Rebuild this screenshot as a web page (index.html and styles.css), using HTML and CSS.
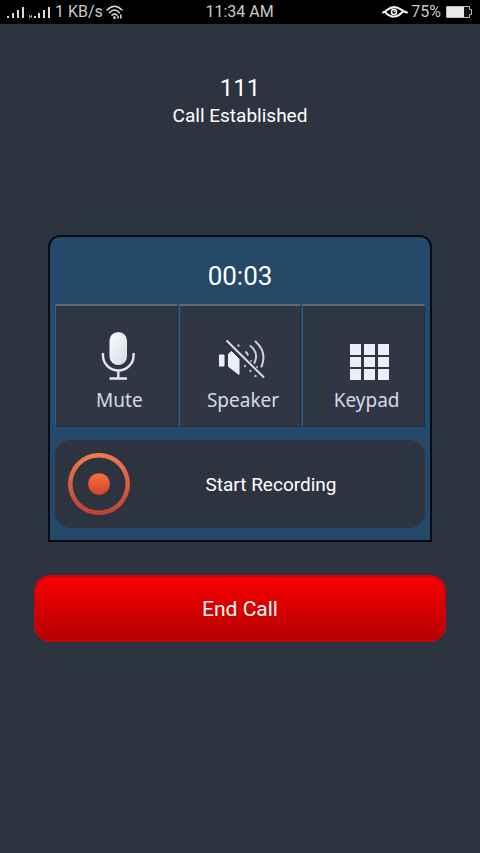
FILE: index.html
```html
<!DOCTYPE html>
<html lang="en">
<head>
<meta charset="utf-8">
<meta name="viewport" content="width=device-width, initial-scale=1">
<title>Call</title>
<link rel="stylesheet" href="styles.css">
</head>
<body>
<header class="status">
  <div class="status-side">
    <svg width="46" height="16" viewBox="0 0 46 16" fill="#d8d8d8" aria-hidden="true">
      <path d="M1 12h2v2H1zM6 9h2v5H6zM11 6h2v8h-2zM16 3h2v11h-2zM32 9h2v5h-2zM37 6h2v8h-2zM42 3h2v11h-2zM28 12h2v2h-2z"/>
      <path d="M23 11h1v3h-1zM25 11h1v3h-1zM24 12h1v1h-1z" opacity=".7"/>
    </svg>
    <span>1 KB/s</span>
    <svg width="18" height="16" viewBox="0 0 18 16" fill="none" stroke="#d8d8d8" stroke-width="1.500" stroke-linecap="round" aria-hidden="true">
      <path d="M1 6Q8.500-1.500 16 6M3.500 8.700Q8.500 3.500 13.500 8.700M6 11.300Q8.500 8.800 11 11.300"/>
      <circle cx="8.500" cy="13.700" r=".6" fill="#d8d8d8"/>
      <path d="M12 12.500v1.500M14.800 11v3"/>
    </svg>
  </div>
  <time class="clock">11:34 AM</time>
  <div class="status-side status-right">
    <svg width="27" height="16" viewBox="0 0 27 16" fill="none" stroke="#f2f2f2" stroke-width="2" stroke-linecap="round" aria-hidden="true">
      <path d="M2 8.500Q4 8 6 6Q13 .5 20 5.500Q22 7.500 26 8.500M4.500 8.500Q13 17 21.500 8"/>
      <circle cx="13" cy="8" r="2.500" stroke-width="1.600"/><circle cx="13.500" cy="7.500" r=".8" fill="#eee" stroke="none"/>
    </svg>
    <span>75%</span>
    <svg class="battery" width="27" height="14" viewBox="0 0 27 14" aria-hidden="true">
      <path d="M.5 1.500h23v3h2v5h-2v3H.5z" fill="#111" stroke="#bbb"/>
      <path d="M1 2h17v10H1z" fill="#e8e8e8"/>
    </svg>
  </div>
</header>
<main class="call">
  <h1 class="number">111</h1>
  <p class="state">Call Established</p>
  <section class="panel" aria-label="Call controls">
    <time class="timer">00:03</time>
    <div class="keys">
      <button class="key" type="button">
        <svg width="48" height="50" viewBox="0 0 48 50" aria-hidden="true">
          <defs><linearGradient id="mic" x1="0" x2="1" y1="0" y2="1"><stop offset="0" stop-color="#fff"/><stop offset="1" stop-color="#d4d8e3"/></linearGradient></defs>
          <rect x="14.500" y="1" width="17.500" height="33" rx="8.700" fill="url(#mic)"/>
          <path d="M8 22v2.500a15.300 15 0 0 0 30.600 0V22M23.300 39.500V47M14.500 47.500h17.500" fill="none" stroke="#e4e8f2" stroke-width="2.400"/>
        </svg>
        <span>Mute</span>
      </button>
      <button class="key" type="button">
        <svg width="48" height="50" viewBox="0 0 48 50" aria-hidden="true">
          <g transform="translate(-2 0)">
            <path d="M1 24h6v11H1zM11.500 23l3-2.500 7.500 7.500V43.500l-10.500-8z" fill="#eceff7" stroke="#eceff7" stroke-linejoin="round"/>
            <path d="M33.500 15q9 7 3.500 18M38.500 10.500q12 11 6 25" fill="none" stroke="#ccd1dd" stroke-width="2" stroke-linecap="round"/>
            <path d="M28.500 20.500q2 2 2.500 4" fill="none" stroke="#ccd1dd" stroke-width="2"/>
            <path d="M9.500 9l37.500 37" stroke="#303644" stroke-width="5"/>
            <path d="M9.500 9.500L47 46.500" stroke="#dce0ea" stroke-width="2"/>
            <g fill="#b9bfcd"><circle cx="21.500" cy="14.500" r="1.200"/><circle cx="28" cy="35" r="1.200"/><circle cx="33.500" cy="40" r="1.200"/><circle cx="38.500" cy="45" r="1.200"/><circle cx="34" cy="30" r="1"/><circle cx="40" cy="36" r="1"/></g>
          </g>
        </svg>
        <span>Speaker</span>
      </button>
      <button class="key" type="button">
        <svg width="48" height="50" viewBox="0 0 48 50" fill="#eceff7" aria-hidden="true">
          <path d="M7 13h11v11H7zM21 13h11v11H21zM35 13h11v11H35zM7 26h11v10H7zM21 26h11v10H21zM35 26h11v10H35zM7 38h11v11H7zM21 38h11v11H21zM35 38h11v11H35z"/>
        </svg>
        <span>Keypad</span>
      </button>
    </div>
    <button class="record" type="button">
      <svg width="62" height="62" viewBox="0 0 62 62" aria-hidden="true">
        <defs>
          <linearGradient id="ring" x1="0" x2="0" y1="0" y2="1"><stop offset="0" stop-color="#ef7d50"/><stop offset="1" stop-color="#bd4035"/></linearGradient>
          <linearGradient id="dot" x1="0" x2="0" y1="0" y2="1"><stop offset="0" stop-color="#fa7040"/><stop offset="1" stop-color="#cf4527"/></linearGradient>
        </defs>
        <path fill="url(#ring)" fill-rule="evenodd" d="M31 0a31 31 0 0 1 0 62a31 31 0 0 1 0-62zM31 4.500a26.500 26.500 0 0 0 0 53a26.500 26.500 0 0 0 0-53z"/>
        <circle cx="31" cy="31" r="10.800" fill="url(#dot)"/>
      </svg>
      <span class="record-label">Start Recording</span>
    </button>
  </section>
  <button class="end" type="button">End Call</button>
</main>
</body>
</html>
```
FILE: styles.css
```css
* {
  box-sizing: border-box;
}

body {
  margin: 0;
  min-height: 100vh;
  background: #2e3340;
  color: #fff;
  font-family: Roboto, "Liberation Sans", sans-serif;
}

button {
  margin: 0;
  border: 0;
  color: inherit;
  font: inherit;
  cursor: pointer;
}

svg {
  display: block;
  flex: none;
}

.status {
  display: grid;
  grid-template-columns: 1fr auto 1fr;
  align-items: center;
  height: 24px;
  padding: 0 7px 0 6px;
  background: #000;
  color: #c9c9c9;
  font-size: 16px;
  line-height: 24px;
}

.status-side {
  display: flex;
  align-items: center;
  gap: 3px;
}

.status-right {
  justify-content: flex-end;
}

.battery {
  margin-left: 2px;
}

.call {
  display: flex;
  flex-direction: column;
  align-items: center;
  padding-top: 48px;
}

.number {
  margin: 0;
  font-size: 24px;
  font-weight: 400;
  line-height: 32px;
}

.state {
  margin: 0;
  font-size: 19px;
  line-height: 24px;
}

.panel {
  width: 80%;
  margin-top: 107px;
  padding: 0 5px 12px;
  border: 2px solid #050c18;
  border-radius: 12px 12px 0 0;
  background: #264869;
}

.timer {
  display: block;
  padding: 23px 0 12px;
  font-size: 26px;
  line-height: 32px;
  text-align: center;
}

.keys {
  display: grid;
  grid-template-columns: repeat(3, 1fr);
  gap: 1px;
}

.key {
  display: flex;
  flex-direction: column;
  align-items: center;
  gap: 7px;
  height: 123px;
  padding: 25px 0 0 6px;
  border: 1px solid #1c2f48;
  border-top: 2px solid #586d84;
  border-left-color: #36597d;
  background: #303644;
  color: #d5dae7;
  font-family: "Noto Sans", "Open Sans", sans-serif;
  font-size: 19px;
  line-height: 24px;
}

.record {
  display: flex;
  align-items: center;
  width: 100%;
  height: 88px;
  margin-top: 13px;
  padding: 0 13px;
  border-radius: 16px;
  background: #2e3340;
  font-size: 19px;
}

.record-label {
  flex: 1;
  text-align: center;
}

.end {
  width: 86%;
  height: 67px;
  margin-top: 33px;
  border: 2px solid #c5060c;
  border-radius: 16px;
  background: linear-gradient(#fa0000, #b40000);
  font-size: 21px;
}
```
